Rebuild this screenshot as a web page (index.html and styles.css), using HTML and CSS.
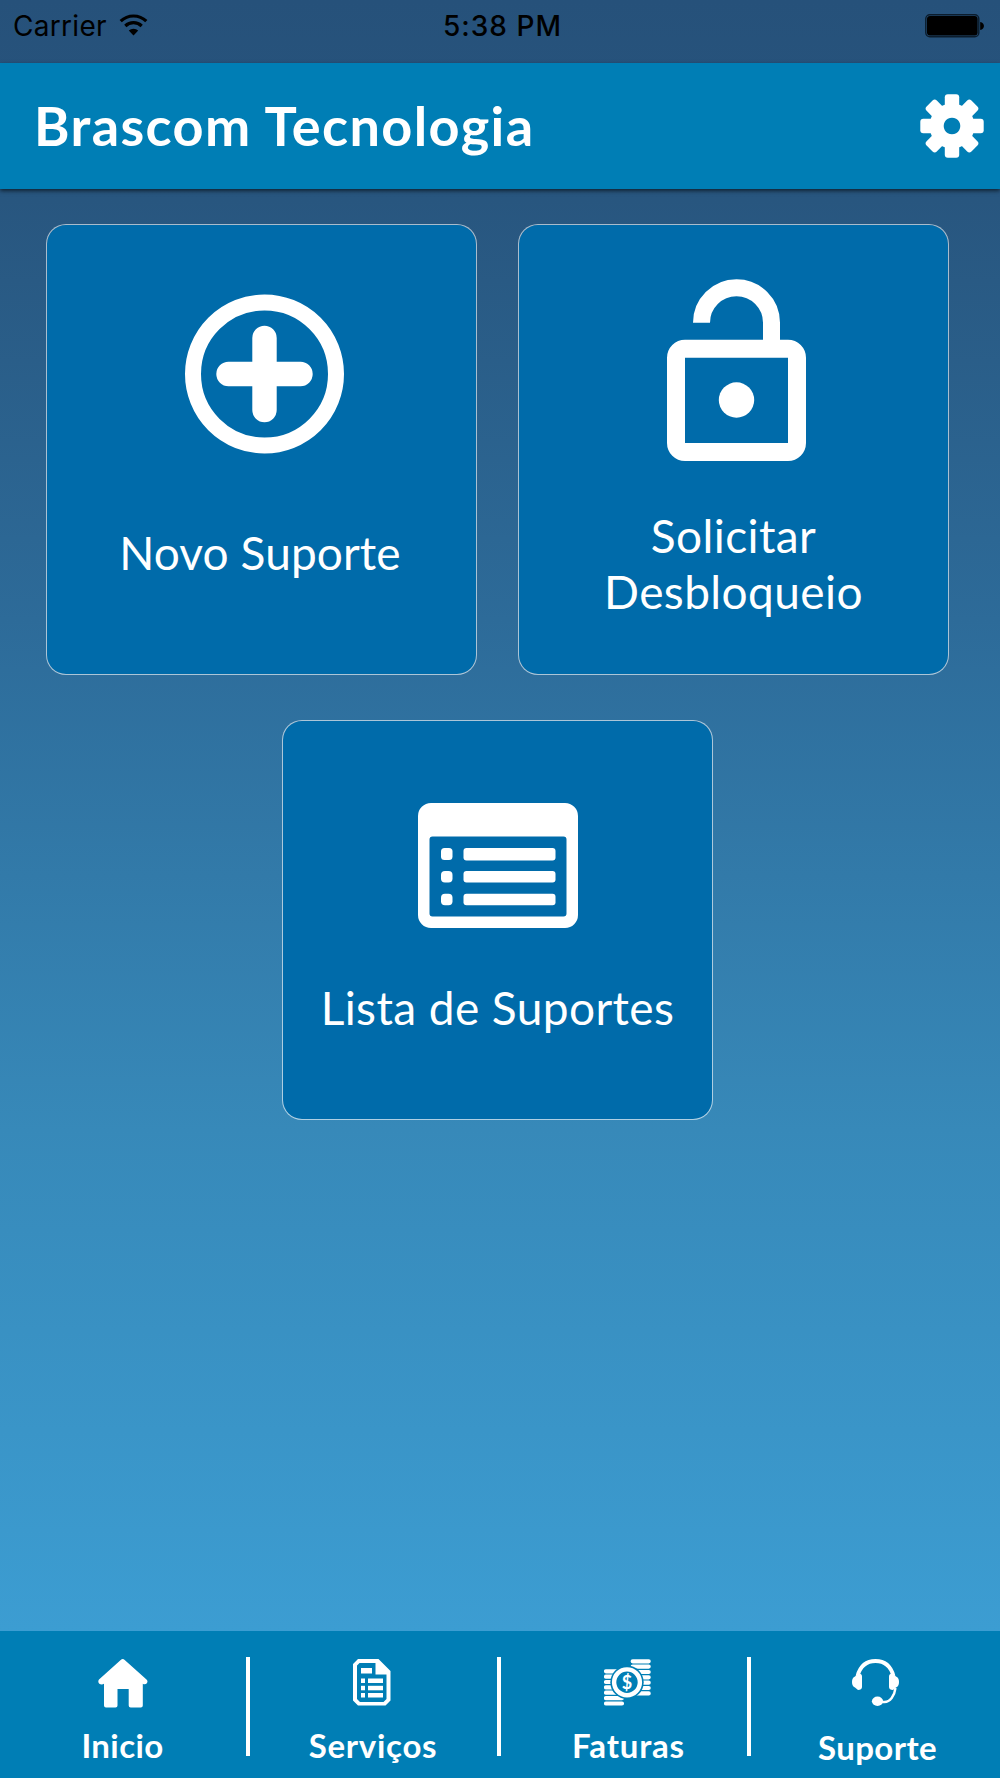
FILE: index.html
```
<!DOCTYPE html>
<html lang="pt-BR">
<head>
  <meta charset="UTF-8" />
  <title>Brascom Tecnologia</title>
  <meta name="viewport" content="width=device-width, initial-scale=1.0" />
  <link rel="stylesheet" href="styles.css">
</head>
<body>
  <div class="app">
    <div class="status-bar">
      <div class="carrier">
        <span>Carrier</span>
        <svg class="wifi" width="29" height="22" viewBox="0 0 28 22">
          <path d="M1.2 7.2a18.4 18.4 0 0 1 25.6 0" fill="none" stroke="#000" stroke-width="3.2" />
          <path d="M5.8 12a11.8 11.8 0 0 1 16.4 0" fill="none" stroke="#000" stroke-width="3.2" />
          <path d="M14 21.5l-4.7-4.9a6.6 6.6 0 0 1 9.4 0z" />
        </svg>
      </div>
      <span class="time">5:38 PM</span>
      <svg class="battery" width="60" height="24" viewBox="0 0 60 24">
        <rect x="0.8" y="0.8" width="53" height="22" rx="4" fill="none" stroke="#0b1c2c" stroke-width="1.4" />
        <rect x="2" y="2" width="50.6" height="19.6" rx="3" />
        <path d="M55.2 8c5 1 5 7 0 8z" />
      </svg>
    </div>

    <header class="header">
      <h1>Brascom Tecnologia</h1>
      <svg class="gear" width="64" height="64" viewBox="-32 -32 64 64" fill="#fff">
        <path fill-rule="evenodd" d="M0-22.5a22.5 22.5 0 1 0 .01 0zM0-8.3a8.3 8.3 0 1 1-.01 0z" />
        <g id="teeth">
          <rect x="-7.2" y="-31.7" width="14.4" height="15" rx="3" />
          <rect x="-7.2" y="16.7" width="14.4" height="15" rx="3" />
          <rect x="-31.7" y="-7.2" width="15" height="14.4" rx="3" />
          <rect x="16.7" y="-7.2" width="15" height="14.4" rx="3" />
        </g>
        <use href="#teeth" transform="rotate(45)" />
      </svg>
    </header>

    <main class="cards">
      <a class="card card-novo">
        <svg width="159" height="160" viewBox="0 0 159 160" fill="none" stroke="#fff">
          <circle cx="79.5" cy="80" r="71.5" stroke-width="16" />
          <path d="M79.5 44v72M43.5 80h72" stroke-width="24.4" stroke-linecap="round" />
        </svg>
        <span>Novo Suporte</span>
      </a>
      <a class="card card-desbloqueio">
        <svg width="139" height="182" viewBox="0 0 139 182" fill="#fff">
          <path d="M34.5 43.7a35 35 0 0 1 70 0V68" fill="none" stroke="#fff" stroke-width="17" />
          <path fill-rule="evenodd" d="M18 60.7h103a18 18 0 0 1 18 18V164a18 18 0 0 1-18 18H18a18 18 0 0 1-18-18V78.7a18 18 0 0 1 18-18zM18 78.7V164h103V78.7z" />
          <circle cx="69.5" cy="121" r="17.7" />
        </svg>
        <span>Solicitar<br>Desbloqueio</span>
      </a>
      <a class="card card-lista">
        <svg width="160" height="125" viewBox="0 0 160 125" fill="#fff">
          <path fill-rule="evenodd" d="M13 0h134a13 13 0 0 1 13 13v99a13 13 0 0 1-13 13H13a13 13 0 0 1-13-13V13A13 13 0 0 1 13 0zM14.5 33.5a3 3 0 0 0-3 3v74a3 3 0 0 0 3 3h131a3 3 0 0 0 3-3v-74a3 3 0 0 0-3-3z" />
          <rect x="23" y="45" width="11.5" height="12" rx="3.5" />
          <rect x="23" y="68" width="11.5" height="11.5" rx="4" />
          <rect x="23" y="90.7" width="11.5" height="11.5" rx="4" />
          <rect x="45.5" y="45" width="92" height="12.5" rx="3" />
          <rect x="45.5" y="68" width="92" height="11.5" rx="3" />
          <rect x="45.5" y="90.7" width="92" height="11.5" rx="3" />
        </svg>
        <span>Lista de Suportes</span>
      </a>
    </main>

    <nav class="tab-bar">
      <a class="tab tab-inicio">
        <svg width="50" height="49" viewBox="0 0 50 49" fill="#fff">
          <path d="M22.7.9a3 3 0 0 1 4 0L48.5 20.5c2.6 2.5-.5 6.3-3.7 4.3V46.5a2 2 0 0 1-2 2H32.7a2 2 0 0 1-2-2V30H19.5v16.5a2 2 0 0 1-2 2H8a2 2 0 0 1-2-2V24.8C2.5 27-1.3 23.4 1 20.5z" />
        </svg>
        <span>Inicio</span>
      </a>
      <a class="tab tab-servicos">
        <svg width="38" height="47" viewBox="0 0 38 47" fill="#fff">
          <path fill-rule="evenodd" d="M5 0h20.5L37.5 12v29.5l-5 5H5l-5-5V5zM6.5 4L4 6.5v33.5l3 3h23.5l3-3V15.500H22.5V4z" />
          <rect x="8" y="9" width="11" height="5.5" />
          <rect x="8" y="19.5" width="4" height="4.5" />
          <rect x="15" y="19.5" width="15" height="4.5" />
          <rect x="8" y="26.8" width="4" height="4.5" />
          <rect x="15" y="26.8" width="15" height="4.5" />
          <rect x="8" y="34" width="4" height="4.5" />
          <rect x="15" y="34" width="15" height="4.5" />
        </svg>
        <span>Serviços</span>
      </a>
      <a class="tab tab-faturas">
        <svg width="47" height="47" viewBox="0 0 47 47">
          <path d="M2 12.3h16M2 17.7h16M2 23h16M2 28.4h16M2 33.7h16M2 39.1h16M2 44.5h16M28.7 2.3h16M28.7 7.6h16M28.7 13h16M28.7 18.3h16M28.7 23.7h16M28.7 29h16M28.7 34.4h16" stroke="#fff" stroke-width="4.2" stroke-linecap="round" />
          <circle class="coin-gap" cx="23" cy="23.3" r="16.7" />
          <circle cx="23" cy="23.3" r="12.9" fill="none" stroke="#fff" stroke-width="4.4" />
          <text class="coin-sign" x="23" y="30">$</text>
        </svg>
        <span>Faturas</span>
      </a>
      <a class="tab tab-suporte">
        <svg width="47" height="47" viewBox="0 0 47 47" fill="#fff">
          <path d="M5.5 17C8 8 14 2 23.5 2S39 8 41.5 17" fill="none" stroke="#fff" stroke-width="3.8" />
          <path d="M43.5 29c-1 8-5.5 14-11 14h-5" fill="none" stroke="#fff" stroke-width="2.4" />
          <path d="M6 14.5c3 0 4 1 4 3V28c0 2-1.5 3-4 3L3 28.5C1 27.5 0 26 0 23s1-4.5 3-5.5z" />
          <path d="M41 14.5c-3 0-4 1-4 3V28c0 2 1.5 3 4 3l3-2.5c2-1 3-2.5 3-5.5s-1-4.5-3-5.5z" />
          <ellipse cx="25.5" cy="42.3" rx="5.6" ry="4.7" />
        </svg>
        <span>Suporte</span>
      </a>
    </nav>
  </div>
</body>
</html>
```
FILE: styles.css
```
* {
  box-sizing: border-box;
}

body {
  margin: 0;
  font-family: 'Lato', sans-serif;
  color: #fff;
}

svg {
  display: block;
  flex-shrink: 0;
}

.app {
  height: 1778px;
  display: flex;
  flex-direction: column;
  background: linear-gradient(#26517a 0, #28567f 200px, #2d6b99 620px, #3789b9 1130px, #3c9dd2 1631px);
}

/* Status bar */
.status-bar {
  height: 63px;
  padding: 0 15px 0 13px;
  display: grid;
  grid-template-columns: 1fr auto 1fr;
  align-items: start;
  font-family: 'Inter', sans-serif;
  font-size: 28px;
  line-height: 53px;
  color: #000;
}

.carrier {
  display: flex;
  gap: 12px;
  letter-spacing: 0.3px;
}

.wifi {
  margin-top: 14px;
}

.time {
  padding-left: 7px;
  font-weight: 500;
  letter-spacing: 1px;
}

.battery {
  justify-self: end;
  margin-top: 14px;
}

/* Header */
.header {
  height: 126px;
  padding: 0 16px 0 34px;
  display: flex;
  justify-content: space-between;
  align-items: center;
  background: #007eb5;
  box-shadow: 0 2px 4px rgba(0, 0, 0, 0.6);
}

h1 {
  margin: 0 0 2px;
  font-size: 54px;
  font-weight: 700;
  letter-spacing: 1.4px;
}

/* Cards */
.cards {
  flex: 1;
  padding: 35px 51px 0 46px;
  display: flex;
  flex-wrap: wrap;
  justify-content: center;
  align-content: flex-start;
  gap: 45px 41px;
}

.card {
  width: 431px;
  height: 451px;
  display: flex;
  flex-direction: column;
  align-items: center;
  border: 1px solid rgba(255, 255, 255, 0.6);
  border-radius: 20px;
  background: #006baa;
  background-clip: padding-box;
  font-size: 46px;
  letter-spacing: 0.4px;
  line-height: 56px;
  text-align: center;
  white-space: nowrap;
}

.card-novo {
  padding-top: 69px;
}

.card-novo svg {
  margin: 0 0 71px 6px;
}

.card-novo span {
  margin-right: 3px;
  letter-spacing: 0.1px;
}

.card-desbloqueio {
  padding-top: 54px;
}

.card-desbloqueio svg {
  margin: 0 0 47px 6px;
}

.card-lista {
  height: 400px;
  padding-top: 82px;
}

.card-lista svg {
  margin-bottom: 52px;
}

/* Tab bar */
.tab-bar {
  height: 147px;
  padding-top: 26px;
  display: grid;
  grid-template-columns: 248px 251px 250px 1fr;
  background: #007eb5;
}

.tab {
  height: 99px;
  padding-top: 2px;
  position: relative;
  display: flex;
  flex-direction: column;
  align-items: center;
  justify-content: space-between;
  font-size: 33px;
  font-weight: 700;
  letter-spacing: 0.4px;
  line-height: 22px;
}

.tab + .tab::before {
  content: '';
  position: absolute;
  left: -2px;
  top: 0;
  width: 4px;
  height: 99px;
  background: #fff;
}

.tab-inicio {
  padding-right: 3px;
}

.tab-servicos {
  padding-right: 3px;
}

.tab-servicos span {
  padding-left: 2px;
  letter-spacing: 0.7px;
}

.tab-faturas {
  padding-left: 7px;
}

.tab-faturas span {
  padding-left: 2px;
  letter-spacing: 0.8px;
}

.tab-suporte {
  padding-left: 2px;
}

.tab-suporte span {
  padding-left: 4px;
  line-height: 18px;
}

.coin-gap {
  fill: #007eb5;
}

.coin-sign {
  fill: #fff;
  font: 700 18px 'Lato', sans-serif;
  letter-spacing: 0;
  text-anchor: middle;
}
```
